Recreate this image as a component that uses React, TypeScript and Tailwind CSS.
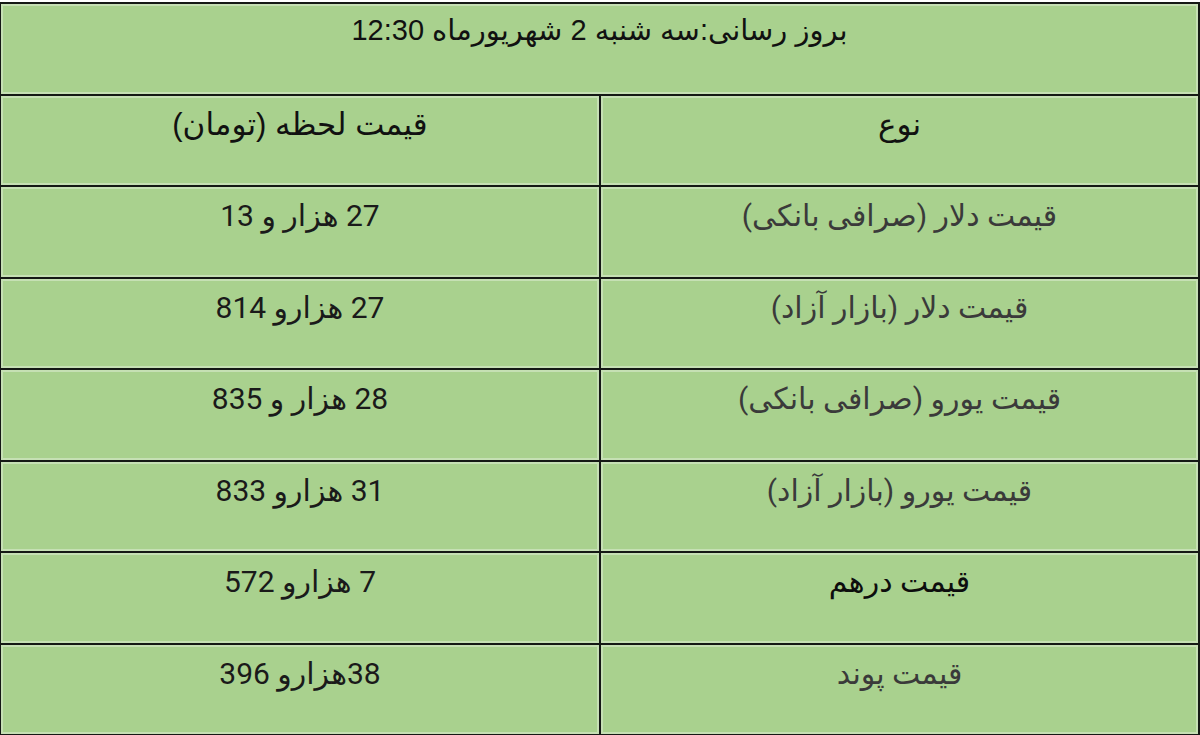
const rows = [
  { type: 'قیمت دلار (صرافی بانکی)', price: '27 هزار و 13', dark: false },
  { type: 'قیمت دلار (بازار آزاد)', price: '27 هزارو 814', dark: false },
  { type: 'قیمت یورو (صرافی بانکی)', price: '28 هزار و 835', dark: false },
  { type: 'قیمت یورو (بازار آزاد)', price: '31 هزارو 833', dark: false },
  { type: 'قیمت درهم', price: '7 هزارو 572', dark: true },
  { type: 'قیمت پوند', price: '38هزارو 396', dark: false },
];

const cell =
  'border-2 border-[#151915] shadow-[inset_0_0_0_2px_#c6e0b4] align-top text-center';

export default function App() {
  return (
    <div className="w-[1200px] h-[735px] bg-white pt-[2px] overflow-hidden" dir="rtl">
      <table className="w-[1199px] border-collapse bg-[#a9d18e] table-fixed">
        <colgroup>
          <col className="w-[599px]" />
          <col className="w-[600px]" />
        </colgroup>
        <tbody>
          <tr className="h-[92px]">
            <td
              colSpan={2}
              className={`${cell} text-[29px] text-[#111] font-['Liberation_Sans','DejaVu_Sans',sans-serif] pt-[5px]`}
            >
              بروز رسانی:سه شنبه 2 شهریورماه 12:30
            </td>
          </tr>
          <tr className="h-[91px]">
            <td className={`${cell} text-[31px] text-[#111] font-['Liberation_Sans','DejaVu_Sans',sans-serif] pt-[6px]`}>
              نوع
            </td>
            <td className={`${cell} text-[31px] text-[#111] font-['Liberation_Sans','DejaVu_Sans',sans-serif] pt-[6px]`}>
              قیمت لحظه (تومان)
            </td>
          </tr>
          {rows.map((r, i) => (
            <tr key={i} className={i % 2 === 0 ? 'h-[92px]' : 'h-[91px]'}>
              <td
                className={`${cell} text-[30px] pt-[6px] font-['Roboto','DejaVu_Sans',sans-serif] ${
                  r.dark ? 'text-[#0d0d0d]' : 'text-[#3a3a3a]'
                }`}
              >
                {r.type}
              </td>
              <td className={`${cell} text-[30px] pt-[6px] text-[#1a1a1a] font-['Roboto','DejaVu_Sans',sans-serif]`}>
                {r.price}
              </td>
            </tr>
          ))}
        </tbody>
      </table>
    </div>
  );
}
